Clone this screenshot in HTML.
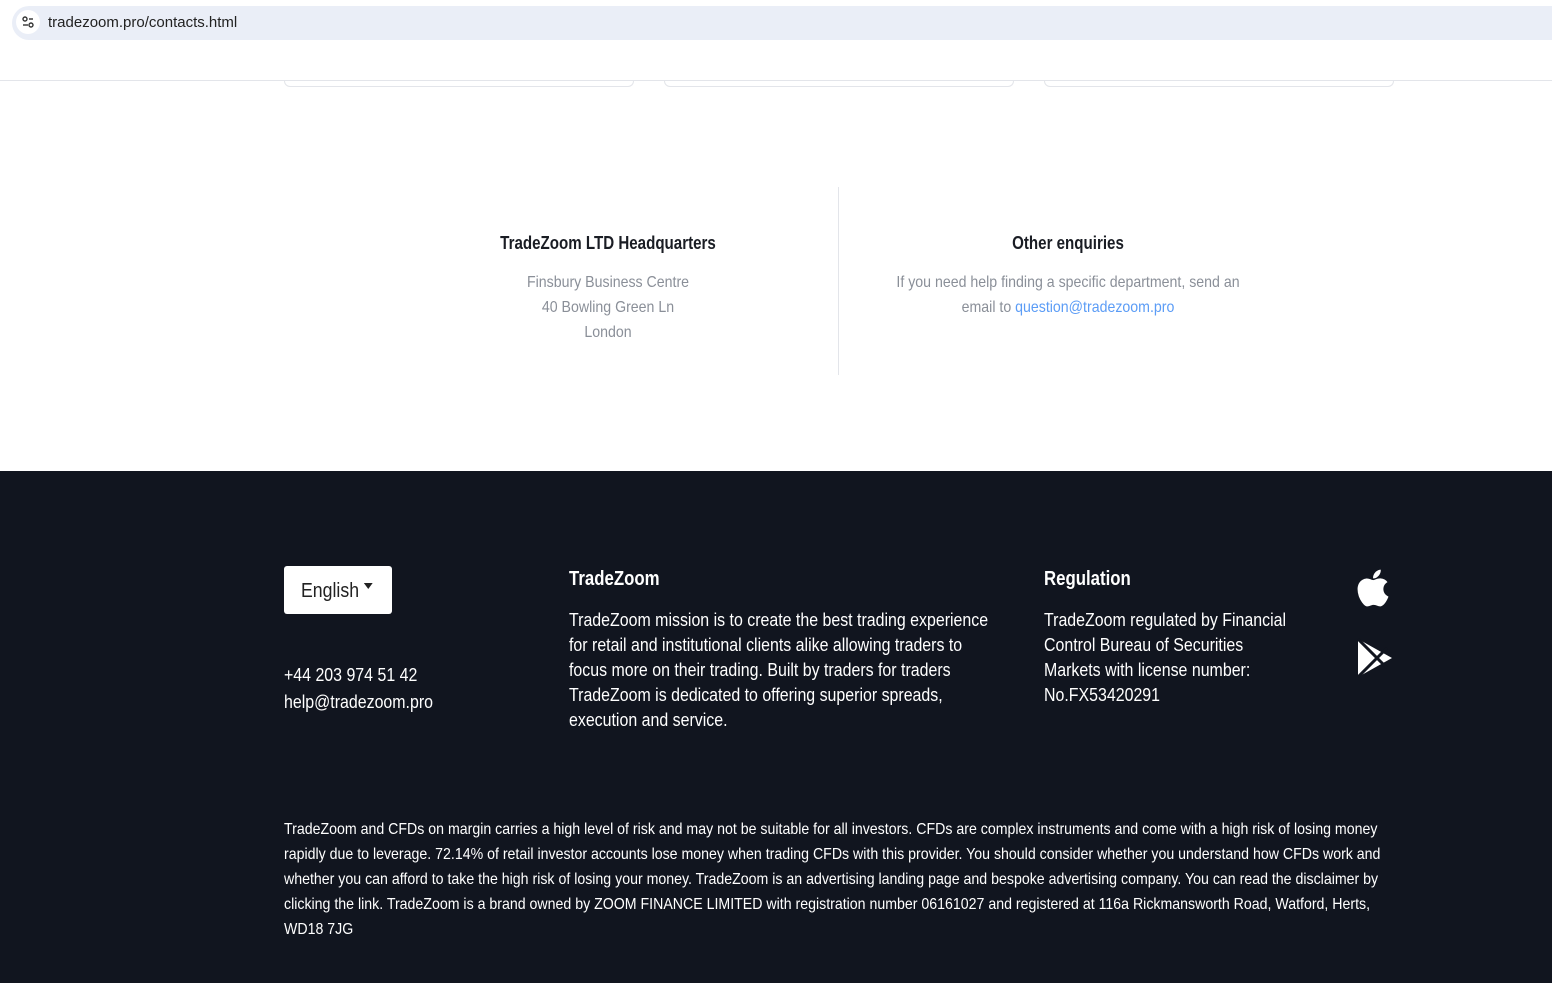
<!DOCTYPE html>
<html><head><meta charset="utf-8"><style>
*{margin:0;padding:0;box-sizing:border-box}
body{width:1552px;height:983px;overflow:hidden;background:#fff;font-family:"Liberation Sans",sans-serif;position:relative}
.abs{position:absolute}
.n{transform:scaleX(.885);transform-origin:left top;white-space:nowrap}
.b{transform:scaleX(.84);transform-origin:left top;white-space:nowrap}
.nc{transform:scaleX(.885);transform-origin:center top;white-space:nowrap}
.bc{transform:scaleX(.84);transform-origin:center top;white-space:nowrap}
.url{left:12px;top:6px;width:1560px;height:34px;background:#eaeef7;border-radius:17px}
.ic{left:16px;top:10px;width:24px;height:24px;border-radius:12px;background:#fff}
.card{top:80px;height:7px;border:1px solid #e3e5ea;border-top:none;border-radius:0 0 6px 6px}
h3{font-size:18px;font-weight:bold;color:#1a1d24;text-align:center}
.g{font-size:16px;color:#8a8f98;line-height:25px;text-align:center}
.foot{left:0;top:471px;width:1552px;height:512px;background:#11151f;color:#fff}
.w{color:#fff;font-size:18px;line-height:25px}
</style></head><body>
<div class="abs url"></div>
<div class="abs ic"><svg width="24" height="24" viewBox="0 0 24 24"><g stroke="#333" stroke-width="1.4" fill="none"><circle cx="9" cy="9" r="2"/><line x1="13" y1="9" x2="17" y2="9"/><line x1="7" y1="15" x2="12" y2="15"/><circle cx="15" cy="15" r="2"/></g></svg></div>
<div class="abs" style="left:48px;top:14px;font-size:15px;color:#222">tradezoom.pro/contacts.html</div>
<div class="abs" style="left:0;top:80px;width:1552px;height:1px;background:#e3e5ea"></div>
<div class="abs card" style="left:284px;width:350px"></div>
<div class="abs card" style="left:664px;width:350px"></div>
<div class="abs card" style="left:1044px;width:350px"></div>
<div class="abs" style="left:838px;top:187px;width:1px;height:188px;background:#e3e5ea"></div>
<div class="abs bc" style="left:408px;top:233px;width:400px"><h3>TradeZoom LTD Headquarters</h3></div>
<div class="abs nc g" style="left:408px;top:270px;width:400px">Finsbury Business Centre<br>40 Bowling Green Ln<br>London</div>
<div class="abs bc" style="left:868px;top:233px;width:400px"><h3>Other enquiries</h3></div>
<div class="abs nc g" style="left:868px;top:270px;width:400px">If you need help finding a specific department, send an<br>email to <span style="color:#5b9cf6">question@tradezoom.pro</span></div>
<div class="abs foot">
<div class="abs" style="left:284px;top:95px;width:108px;height:48px;background:#fff;border-radius:3px;color:#222;font-size:20px;padding:14px 0 0 17px"><div class="n">English <span style="display:inline-block;border:5px solid transparent;border-top:6px solid #222;vertical-align:3px"></span></div></div>
<div class="abs w n" style="left:284px;top:191px;line-height:27px">+44 203 974 51 42<br>help@tradezoom.pro</div>
<div class="abs b" style="left:569px;top:97px;font-size:20px;font-weight:bold">TradeZoom</div>
<div class="abs w n" style="left:569px;top:137px">TradeZoom mission is to create the best trading experience<br>for retail and institutional clients alike allowing traders to<br>focus more on their trading. Built by traders for traders<br>TradeZoom is dedicated to offering superior spreads,<br>execution and service.</div>
<div class="abs b" style="left:1044px;top:97px;font-size:20px;font-weight:bold">Regulation</div>
<div class="abs w n" style="left:1044px;top:137px">TradeZoom regulated by Financial<br>Control Bureau of Securities<br>Markets with license number:<br>No.FX53420291</div>
<svg class="abs" style="left:1355px;top:96px" width="36" height="42" viewBox="0 0 384 512"><path fill="#fff" d="M318.7 268.7c-.2-36.7 16.4-64.4 50-84.8-18.8-26.9-47.2-41.7-84.7-44.6-35.5-2.8-74.3 20.7-88.5 20.7-15 0-49.4-19.7-76.4-19.7C63.3 141.2 4 184.8 4 273.5q0 39.3 14.4 81.2c12.8 36.7 59 126.7 107.2 125.2 25.2-.6 43-17.9 75.8-17.9 31.8 0 48.3 17.9 76.4 17.9 48.6-.7 90.4-82.5 102.6-119.3-65.2-30.7-61.7-90-61.7-91.9zm-56.6-164.2c27.3-32.4 24.8-61.9 24-72.5-24.1 1.4-52 16.4-67.9 34.9-17.5 19.8-27.8 44.3-25.6 71.9 26.1 2 49.9-11.4 69.5-34.3z"/></svg>
<svg class="abs" style="left:1357px;top:167px" width="36" height="40" viewBox="0 0 36 40"><path fill="#fff" d="M1 1L35 20L1 39Z"/><path d="M1 1L30 30M1 39L30 10" stroke="#11151f" stroke-width="3"/></svg>
<div class="abs n" style="left:284px;top:346px;font-size:16px;line-height:25px;color:#fff">TradeZoom and CFDs on margin carries a high level of risk and may not be suitable for all investors. CFDs are complex instruments and come with a high risk of losing money<br>rapidly due to leverage. 72.14% of retail investor accounts lose money when trading CFDs with this provider. You should consider whether you understand how CFDs work and<br>whether you can afford to take the high risk of losing your money. TradeZoom is an advertising landing page and bespoke advertising company. You can read the disclaimer by<br>clicking the link. TradeZoom is a brand owned by ZOOM FINANCE LIMITED with registration number 06161027 and registered at 116a Rickmansworth Road, Watford, Herts,<br>WD18 7JG</div>
</div>
</body></html>
